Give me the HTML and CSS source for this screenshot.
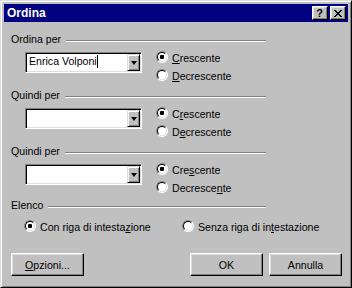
FILE: index.html
```html
<!DOCTYPE html>
<html lang="it">
<head>
<meta charset="utf-8">
<title>Ordina</title>
<link rel="stylesheet" href="styles.css">
</head>
<body>
<div class="window">
  <div class="titlebar">
    <span class="title">Ordina</span>
    <div class="caption-btns">
      <span class="cbtn help">?</span>
      <span class="cbtn close">
        <svg width="8" height="7" viewBox="0 0 8 7" shape-rendering="crispEdges">
          <path fill="#000" d="M0 0h2v1H0zM6 0h2v1H6zM1 1h2v1H1zM5 1h2v1H5zM2 2h4v1H2zM3 3h2v1H3zM2 4h4v1H2zM1 5h2v1H1zM5 5h2v1H5zM0 6h2v1H0zM6 6h2v1H6z"/>
        </svg>
      </span>
    </div>
  </div>
  <div class="content">
    <section class="group">
      <div class="group-head"><span class="head-text">Ordina per</span><i class="rule"></i></div>
      <div class="group-body">
        <div class="combo">
          <span class="combo-text">Enrica Volponi<i class="caret"></i></span>
          <span class="drop"><i class="arrow"></i></span>
        </div>
        <div class="radios">
          <div class="radio-row"><span class="radio checked"></span><span class="rtext"><u>C</u>rescente</span></div>
          <div class="radio-row"><span class="radio"></span><span class="rtext"><u>D</u>ecrescente</span></div>
        </div>
      </div>
    </section>
    <section class="group">
      <div class="group-head"><span class="head-text">Quindi per</span><i class="rule"></i></div>
      <div class="group-body">
        <div class="combo">
          <span class="combo-text"></span>
          <span class="drop"><i class="arrow"></i></span>
        </div>
        <div class="radios">
          <div class="radio-row"><span class="radio checked"></span><span class="rtext">C<u>r</u>escente</span></div>
          <div class="radio-row"><span class="radio"></span><span class="rtext">D<u>e</u>crescente</span></div>
        </div>
      </div>
    </section>
    <section class="group group-last">
      <div class="group-head"><span class="head-text">Quindi per</span><i class="rule"></i></div>
      <div class="group-body">
        <div class="combo">
          <span class="combo-text"></span>
          <span class="drop"><i class="arrow"></i></span>
        </div>
        <div class="radios">
          <div class="radio-row"><span class="radio checked"></span><span class="rtext">Cre<u>s</u>cente</span></div>
          <div class="radio-row"><span class="radio"></span><span class="rtext">Decresce<u>n</u>te</span></div>
        </div>
      </div>
    </section>
    <section class="elenco">
      <div class="group-head"><span class="head-text">Elenco</span><i class="rule"></i></div>
      <div class="elenco-body">
        <div class="radio-row first"><span class="radio checked"></span><span class="rtext">Con riga di intesta<u>z</u>ione</span></div>
        <div class="radio-row"><span class="radio"></span><span class="rtext">Senza riga di in<u>t</u>estazione</span></div>
      </div>
    </section>
    <div class="buttons">
      <span class="btn"><span><u>O</u>pzioni...</span></span>
      <span class="spacer"></span>
      <span class="btn">OK</span>
      <span class="btn">Annulla</span>
    </div>
  </div>
</div>
</body>
</html>
```
FILE: styles.css
```css
* { box-sizing: border-box; }
html, body { margin: 0; padding: 0; }
body {
  width: 352px;
  height: 288px;
  overflow: hidden;
  background: #c0c0c0;
  font-family: "Liberation Sans", Arial, sans-serif;
  font-size: 10.6px;
  color: #000;
}
.window {
  width: 352px;
  height: 288px;
  background: #c0c0c0;
  border: 1px solid;
  border-color: #dfdfdf #000 #000 #dfdfdf;
  box-shadow: inset 1px 1px #fff, inset -1px -1px #808080;
  padding: 3px;
  display: flex;
  flex-direction: column;
}
.titlebar {
  height: 18px;
  flex: none;
  background: #000080;
  display: flex;
  align-items: center;
  justify-content: space-between;
  padding: 0 2px 0 3px;
}
.title {
  color: #fff;
  font-weight: bold;
  font-size: 12px;
  line-height: 14px;
}
.caption-btns { display: flex; gap: 2px; }
.cbtn {
  width: 16px;
  height: 14px;
  background: #c0c0c0;
  border: 1px solid;
  border-color: #fff #000 #000 #fff;
  box-shadow: inset -1px -1px #808080, inset 1px 1px #dfdfdf;
  display: flex;
  align-items: center;
  justify-content: center;
}
.help {
  font-weight: bold;
  font-size: 11px;
  line-height: 12px;
  padding-right: 1px;
}
.close svg { display: block; margin-right: 1px; }
.content {
  flex: 1;
  padding: 12px 6px 0 7px;
  display: flex;
  flex-direction: column;
}
.group { margin-bottom: 6px; }
.group-last { margin-bottom: 4px; }
.group-head {
  width: 255px;
  height: 14px;
  display: flex;
  align-items: flex-start;
  gap: 5px;
}
.head-text {
  line-height: 12px;
  margin-top: -1px;
  white-space: nowrap;
}
.rule {
  flex: 1;
  height: 2px;
  margin-top: 6px;
  border-top: 1px solid #808080;
  border-bottom: 1px solid #fff;
}
.group-body {
  display: flex;
  height: 36px;
  padding-left: 14px;
}
.combo {
  width: 117px;
  height: 21px;
  margin-top: 4px;
  background: #fff;
  border: 1px solid;
  border-color: #808080 #fff #fff #808080;
  box-shadow: inset 1px 1px #000, inset -1px -1px #dfdfdf;
  padding: 1px;
  display: flex;
}
.combo-text {
  flex: 1;
  line-height: 15px;
  padding-left: 2px;
  white-space: nowrap;
}
.caret {
  display: inline-block;
  width: 1px;
  height: 13px;
  background: #000;
  vertical-align: -3px;
}
.drop {
  width: 13px;
  height: 17px;
  background: #c0c0c0;
  border: 1px solid;
  border-color: #dfdfdf #000 #000 #dfdfdf;
  box-shadow: inset 1px 1px #fff, inset -1px -1px #808080;
  display: flex;
  align-items: center;
  justify-content: center;
}
.arrow {
  width: 0;
  height: 0;
  border-left: 3.5px solid transparent;
  border-right: 3.5px solid transparent;
  border-top: 4px solid #000;
  margin-top: 1px;
}
.radios {
  margin-left: 14px;
  display: flex;
  flex-direction: column;
}
.radio-row {
  height: 18px;
  display: flex;
  align-items: center;
  gap: 4px;
}
.rtext {
  line-height: 16px;
  padding-top: 2px;
  white-space: nowrap;
}
.radio {
  width: 12px;
  height: 12px;
  flex: none;
  border-radius: 50%;
  background: #fff;
  border: 1px solid;
  border-color: #808080 #fff #fff #808080;
  position: relative;
}
.radio::before {
  content: "";
  position: absolute;
  inset: 0;
  border-radius: 50%;
  border: 1px solid;
  border-color: #000 #dfdfdf #dfdfdf #000;
}
.radio.checked::after {
  content: "";
  position: absolute;
  left: 3px;
  top: 3px;
  width: 4px;
  height: 4px;
  border-radius: 1px;
  background: #000;
}
u { text-decoration-thickness: 1px; text-underline-offset: 1px; }
.elenco-body {
  display: flex;
  padding: 3px 0 0 13px;
}
.radio-row.first { width: 158px; }
.buttons {
  display: flex;
  gap: 6px;
  margin-top: 18px;
}
.spacer { flex: 1; }
.btn {
  width: 73px;
  height: 23px;
  background: #c0c0c0;
  border: 1px solid;
  border-color: #fff #000 #000 #fff;
  box-shadow: inset -1px -1px #808080, inset 1px 1px #dfdfdf;
  display: flex;
  align-items: center;
  justify-content: center;
  line-height: 14px;
}
```
